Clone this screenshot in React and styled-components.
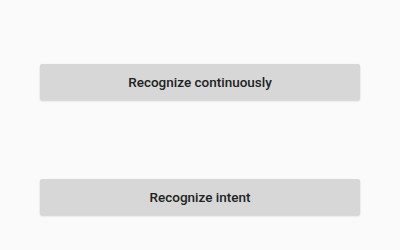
import styled, { createGlobalStyle } from 'styled-components';

const Global = createGlobalStyle`
  html, body {
    margin: 0;
    padding: 0;
    background: #fafafa;
  }
`;

const Screen = styled.div`
  width: 400px;
  height: 250px;
  box-sizing: border-box;
  padding: 64px 40px 0;
  display: flex;
  flex-direction: column;
  gap: 79px;
  background: #fafafa;
`;

const Button = styled.button`
  height: 36px;
  width: 100%;
  border: none;
  border-radius: 2px;
  background: #d6d7d6;
  box-shadow: 0 1px 2px rgba(0, 0, 0, 0.18);
  font-family: Roboto, "Noto Sans", sans-serif;
  font-weight: 500;
  font-size: 13.5px;
  color: #222;
  padding: 0;
`;

export default function App() {
  return (
    <>
      <Global />
      <Screen>
        <Button>Recognize continuously</Button>
        <Button>Recognize intent</Button>
      </Screen>
    </>
  );
}
